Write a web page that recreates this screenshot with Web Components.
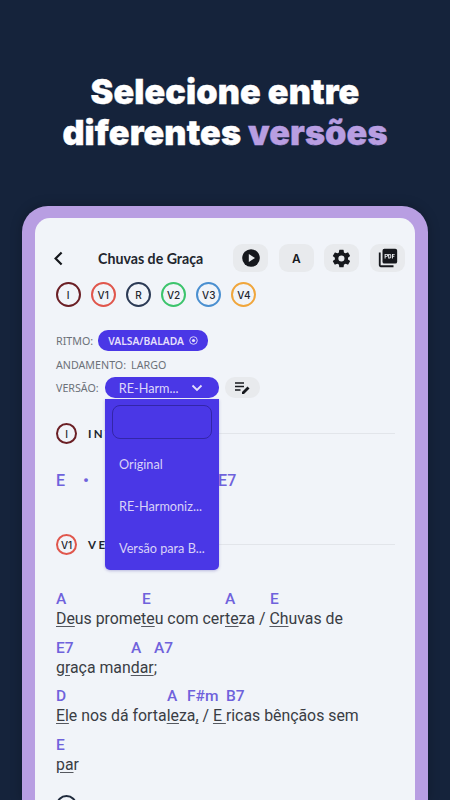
<!DOCTYPE html>
<html><head><meta charset="utf-8">
<style>
html,body{margin:0;padding:0;background:#15233b;height:800px;overflow:hidden}
em{font-style:normal;color:#b89ee2}
</style></head><body>
<promo-screen>
  <span slot="title">Selecione entre<br>diferentes <em>versões</em></span>
  <device-frame>
    <app-header title-text="Chuvas de Graça"></app-header>
    <section-chips></section-chips>
    <meta-panel></meta-panel>
    <section-row chip="I" color="#6b1f25" label="INT" style="margin-top:25px"></section-row>
    <div style="height:25px"></div>
    <chord-line>
      <span style="display:flex;font:500 16px Roboto,sans-serif;color:#6f62dc;height:22px;align-items:center"><span style="width:27px">E</span><span style="width:135px;font-size:17px">•</span><span style="letter-spacing:.2px">E7</span></span>
    </chord-line>
    <section-row chip="V1" color="#e0564c" label="VE" style="margin-top:43px"></section-row>
    <div style="height:34px"></div>
    <lyric-block chords="A:0,E:86,A:169,E:214" lyric="<u>De</u>us prome<u>te</u>u com cer<u>te</u>za / <u>Ch</u>uvas de"></lyric-block>
    <lyric-block chords="E7:0,A:75,A7:98" lyric="<u>gr</u>aça man<u>dar</u>;"></lyric-block>
    <lyric-block chords="D:0,A:111,F#m:131,B7:170" lyric="<u>El</u>e nos dá forta<u>le</u>za<u>,</u> / <u>E </u>ricas bênçãos sem"></lyric-block>
    <lyric-block chords="E:0" lyric="<u>pa</u>r"></lyric-block>
    <section-row chip="R" color="#1f2a3c" label="REFRÃO" style="margin-top:20px"></section-row>
    <version-menu slot="overlay"></version-menu>
  </device-frame>
</promo-screen>
<script>
function def(name,html){
  customElements.define(name,class extends HTMLElement{
    connectedCallback(){
      if(this.shadowRoot)return;
      const r=this.attachShadow({mode:'open'});
      r.innerHTML=typeof html==='function'?html(this):html;
    }
  });
}
def('promo-screen',`<style>
:host{display:block;width:450px;height:800px;overflow:hidden;background:#15233b}
.t{margin:0;padding-top:71px;height:206px;box-sizing:border-box;text-align:center;color:#fff;font:900 34.2px/41px Inter,sans-serif;letter-spacing:.1px;-webkit-text-stroke:.4px currentColor}
::slotted(span){display:block}
</style><div class="t"><slot name="title"></slot></div><slot></slot>`);
def('device-frame',`<style>
:host{display:block;margin:0 22px;background:#b89ee2;border-radius:26px 26px 0 0;padding:12px 13px 0;height:594px;box-sizing:border-box;box-shadow:0 0 12px rgba(0,0,0,.25)}
.s{position:relative;background:#f1f4f9;border-radius:15px 15px 0 0;height:600px;padding:26px 20px 0 21px;box-sizing:border-box;overflow:hidden}
</style><div class="s"><slot></slot><slot name="overlay"></slot></div>`);
const icons={
play:`<svg width="20" height="20" viewBox="0 0 20 20"><circle cx="10" cy="10" r="8.8" fill="#16181d"/><path d="M7.8 6 14 10l-6.2 4z" fill="#e8eaed"/></svg>`,
gear:`<svg width="21" height="21" viewBox="0 0 24 24"><path fill="#16181d" d="M19.4 13a7.5 7.5 0 0 0 0-2l2.1-1.65a.5.5 0 0 0 .12-.64l-2-3.46a.5.5 0 0 0-.61-.22l-2.49 1a7.3 7.3 0 0 0-1.73-1l-.38-2.65A.5.5 0 0 0 13.9 2h-4a.5.5 0 0 0-.49.42l-.38 2.65a7.6 7.6 0 0 0-1.73 1l-2.49-1a.5.5 0 0 0-.61.22l-2 3.46a.5.5 0 0 0 .12.64L4.47 11a8 8 0 0 0 0 2l-2.11 1.65a.5.5 0 0 0-.12.64l2 3.46c.12.22.38.3.61.22l2.49-1c.52.4 1.08.73 1.73 1l.38 2.65c.04.24.25.42.49.42h4c.25 0 .46-.18.49-.42l.38-2.65a7.6 7.6 0 0 0 1.73-1l2.49 1c.23.08.49 0 .61-.22l2-3.46a.5.5 0 0 0-.12-.64zM11.9 15.5a3.5 3.5 0 1 1 0-7 3.5 3.5 0 0 1 0 7z"/></svg>`,
pdf:`<svg width="22" height="22" viewBox="0 0 24 24"><path fill="#16181d" d="M2 6h2v14h14v2H4a2 2 0 0 1-2-2z"/><path fill="#16181d" d="M8 2h12a2 2 0 0 1 2 2v12a2 2 0 0 1-2 2H8a2 2 0 0 1-2-2V4a2 2 0 0 1 2-2z"/><path fill="#e8eaed" d="M8.3 7.5h2.4a1.2 1.2 0 0 1 0 3.2H9.4v1.8H8.3zm1.1 1v1.2h1.1a.6.6 0 0 0 0-1.2zM12.2 7.5h1.7c1 0 1.6.7 1.6 1.6v1.8c0 .9-.6 1.6-1.6 1.6h-1.7zm1.1 1v3h.6c.4 0 .6-.3.6-.7V9.2c0-.4-.2-.7-.6-.7zM16.3 7.5h3v1h-1.9v1.1h1.5v1h-1.5v1.9h-1.1z"/></svg>`
};
def('icon-button',`<style>
:host{display:flex;width:35px;height:28px;align-items:center;justify-content:center;background:#e8eaed;border-radius:9px;font:600 12px Inter,sans-serif;color:#16181d}
</style><slot></slot>`);
def('app-header',el=>`<style>
:host{display:flex;align-items:center;height:28px;margin-right:-10px}
.b{width:15px;display:flex;margin-left:-3px;margin-right:2px}
h1{margin:0;flex:1;font:700 14.2px Lato,sans-serif;color:#22262e;padding-left:28px}
.a{display:flex;gap:10.6px}
</style><span class="b"><svg width="11" height="15" viewBox="0 0 11 15"><path d="M8.6 1.5 2.6 7.5l6 6" fill="none" stroke="#16181d" stroke-width="2.2"/></svg></span><h1>${el.getAttribute('title-text')}</h1>
<div class="a"><icon-button>${icons.play}</icon-button><icon-button>A</icon-button><icon-button>${icons.gear}</icon-button><icon-button>${icons.pdf}</icon-button></div>`);
def('chip-ring',el=>`<style>
:host{display:inline-flex;box-sizing:border-box;width:25px;height:25px;border-radius:50%;border:2px solid ${el.getAttribute('color')};align-items:center;justify-content:center;font:500 10px Inter,sans-serif;color:#22262e;flex:none}
</style>${el.getAttribute('t')}`);
def('section-chips',`<style>
:host{display:flex;gap:10.2px;margin-top:10px;margin-left:-.5px}
</style>
<chip-ring t="I" color="#6b1f25"></chip-ring><chip-ring t="V1" color="#e0564c"></chip-ring><chip-ring t="R" color="#2b3a55"></chip-ring><chip-ring t="V2" color="#3cc46c"></chip-ring><chip-ring t="V3" color="#4a8fd0"></chip-ring><chip-ring t="V4" color="#f0a63c"></chip-ring>`);
def('meta-panel',`<style>
:host{display:block;margin-top:23px;font:400 10.7px "Noto Sans",sans-serif;color:#6c7178}
.r{display:flex;align-items:center;gap:5px}
.p{background:#4a37e6;color:#e4dffb;border-radius:10px;font:600 10.3px "Noto Sans",sans-serif;height:21px;display:flex;align-items:center;padding:0 10px;gap:5px}
.v{background:#4a37e6;color:#dcd6fa;border-radius:10px;height:21px;width:114px;margin-left:1px;box-sizing:border-box;padding-left:14px;display:flex;align-items:center;font:400 12.7px Lato,sans-serif;gap:12px}
.e{width:35px;height:21px;background:#e8eaed;border-radius:10px;margin-left:1px;display:flex;align-items:center;justify-content:center}
.r2{margin-top:6px;height:15px}
.r3{margin-top:5px}
</style>
<div class="r"><span>RITMO:</span><span class="p">VALSA/BALADA <svg width="9" height="9" viewBox="0 0 9 9"><circle cx="4.5" cy="4.5" r="3.8" fill="none" stroke="#e4dffb" stroke-width=".9"/><circle cx="4.5" cy="4.5" r="1.6" fill="#e4dffb"/></svg></span></div>
<div class="r r2"><span>ANDAMENTO:</span><span>LARGO</span></div>
<div class="r r3"><span>VERSÃO:</span><span class="v">RE-Harm... <svg width="12" height="8" viewBox="0 0 12 8"><path d="M1.5 1.5 6 6l4.5-4.5" fill="none" stroke="#e4dffb" stroke-width="1.8"/></svg></span><span class="e"><svg width="17" height="14" viewBox="0 0 17 14"><path d="M1 2h9M1 5.5h9M1 9h5.5" stroke="#16181d" stroke-width="1.6" fill="none"/><path d="M8 13v-2l5.5-5.5 2 2L10 13z" fill="#16181d"/></svg></span></div>`);
def('section-row',el=>`<style>
:host{display:flex;align-items:center;gap:11px;height:21px}
.l{font:700 11.5px Lato,sans-serif;letter-spacing:2.4px;color:#22262e}
.h{flex:1;height:1px;background:#e2e5ea}
chip-ring{width:21px;height:21px}
</style><chip-ring t="${el.getAttribute('chip')}" color="${el.getAttribute('color')}"></chip-ring><span class="l">${el.getAttribute('label')}</span><span class="h"></span>`);
def('chord-line',`<style>:host{display:block}</style><slot></slot>`);
def('lyric-block',el=>{
  const cs=el.getAttribute('chords').split(',').map(s=>{const i=s.lastIndexOf(':');return `<span style="left:${s.slice(i+1)}px">${s.slice(0,i)}</span>`}).join('');
  return `<style>
  :host{display:block;margin-bottom:8.67px}
  .c{position:relative;height:20px}
  .c span{position:absolute;top:0;font:500 15.5px/20px Roboto,sans-serif;color:#6f62dc}
  .l{font:400 15.85px/20px Roboto,sans-serif;color:#3a3d44;white-space:nowrap}
  u{text-underline-offset:2px;text-decoration-color:#55585f}
  </style><div class="c">${cs}</div><div class="l">${el.getAttribute('lyric')}</div>`;
});
def('version-menu',`<style>
:host{position:absolute;left:70px;top:181px;width:114px;height:171px;background:#4a37e6;border-radius:0 0 5px 5px;box-sizing:border-box;padding:6px 7px 0;font:400 12.7px Lato,sans-serif;color:#d8d2f8;box-shadow:0 1px 3px rgba(60,50,160,.3)}
.i{height:34px;box-sizing:border-box;border:1px solid #3326a8;border-radius:8px}
.o{height:42px;display:flex;align-items:center;padding-left:7px}
.o:nth-of-type(2){margin-top:4px}
</style><div class="i"></div><div class="o">Original</div><div class="o">RE-Harmoniz...</div><div class="o">Versão para B...</div>`);
</script>
</body></html>
